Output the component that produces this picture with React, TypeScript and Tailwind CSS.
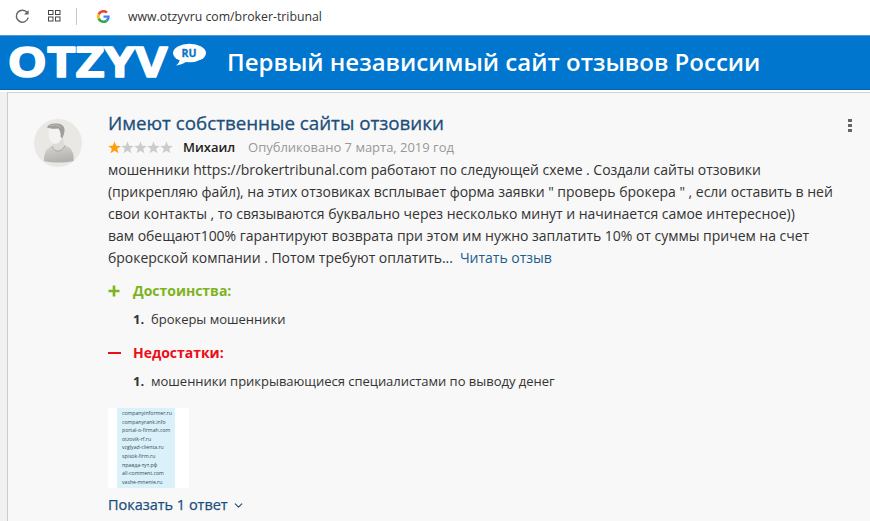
import { ChevronDown } from "lucide-react";

const reviewLines = [
  "мошенники https://brokertribunal.com работают по следующей схеме . Создали сайты отзовики",
  "(прикрепляю файл), на этих отзовиках всплывает форма заявки \" проверь брокера \" , если оставить в ней",
  "свои контакты , то связываются буквально через несколько минут и начинается самое интересное))",
  "вам обещают100% гарантируют возврата при этом им нужно заплатить 10% от суммы причем на счет",
];

const attachedSites = [
  "companyinformer.ru",
  "companyrank.info",
  "portal-o-firmah.com",
  "otzovik-rf.ru",
  "vzglyad-clienta.ru",
  "spisok-firm.ru",
  "правда-тут.рф",
  "all-comment.com",
  "vashe-mnenie.ru",
];

function GoogleIcon() {
  return (
    <svg width="13" height="13" viewBox="0 0 48 48">
      <path fill="#EA4335" d="M24 9.5c3.54 0 6.71 1.22 9.21 3.6l6.85-6.85C35.9 2.38 30.47 0 24 0 14.62 0 6.51 5.38 2.56 13.22l7.98 6.19C12.43 13.72 17.74 9.5 24 9.5z" />
      <path fill="#4285F4" d="M46.98 24.55c0-1.57-.15-3.09-.38-4.55H24v9.02h12.94c-.58 2.96-2.26 5.48-4.78 7.18l7.73 6c4.51-4.18 7.09-10.36 7.09-17.65z" />
      <path fill="#FBBC05" d="M10.53 28.59c-.48-1.45-.76-2.99-.76-4.59s.27-3.14.76-4.59l-7.98-6.19C.92 16.46 0 20.12 0 24c0 3.88.92 7.54 2.56 10.78l7.97-6.19z" />
      <path fill="#34A853" d="M24 48c6.48 0 11.93-2.13 15.89-5.81l-7.73-6c-2.15 1.45-4.92 2.3-8.16 2.3-6.26 0-11.57-4.22-13.47-9.91l-7.98 6.19C6.51 42.62 14.62 48 24 48z" />
    </svg>
  );
}

function AddressBar() {
  return (
    <div className="flex h-[35px] items-center bg-white pb-[3px]">
      <svg className="ml-[15px]" width="15" height="15" viewBox="0 0 15 15" fill="none" stroke="#666" strokeWidth="1.5">
        <path d="M12.2 3.6A6 6 0 1 0 13.2 8.6" />
        <path d="M13.6 1v4.6H9z" fill="#666" stroke="none" />
      </svg>
      <svg className="ml-[18px]" width="13" height="12" viewBox="0 0 13 12" fill="none" stroke="#444" strokeWidth="1">
        <rect x="0.5" y="0.5" width="4.5" height="4" />
        <rect x="7.5" y="0.5" width="4.5" height="4" />
        <rect x="0.5" y="7" width="4.5" height="4" />
        <rect x="7.5" y="7" width="4.5" height="4" />
      </svg>
      <span className="ml-[15px] h-[17px] w-px bg-[#c9c9c9]" />
      <span className="ml-[20px]"><GoogleIcon /></span>
      <span className="ml-[18px] pt-px text-[12.3px] leading-[20px] whitespace-nowrap text-[#333]">
        www.otzyvru com/broker-tribunal
      </span>
    </div>
  );
}

function Logo() {
  return (
    <svg className="overflow-visible" width="210" height="54" viewBox="0 0 210 54">
      <text x="7.5" y="41.4" fontSize="41" fontWeight="700" fill="#fff" stroke="#fff" strokeWidth="1.5" strokeLinejoin="round" textLength="160" lengthAdjust="spacingAndGlyphs">OTZYV</text>
      <ellipse cx="189.5" cy="17" rx="16.5" ry="9.3" fill="#fff" />
      <path d="M180 22c0 3-1.5 5.5-4 7.5 5-.5 9-2.5 11.5-5z" fill="#fff" />
      <text x="181.5" y="21" fontSize="11" fontWeight="700" fill="#0a74c9" stroke="#0a74c9" strokeWidth="0.3" textLength="15" lengthAdjust="spacingAndGlyphs">RU</text>
    </svg>
  );
}

function Avatar() {
  return (
    <svg width="48" height="48" viewBox="0 0 48 48">
      <defs>
        <linearGradient id="shirt" x1="0" y1="0" x2="0.3" y2="1">
          <stop offset="0" stopColor="#dad8d5" />
          <stop offset="1" stopColor="#b3b1ae" />
        </linearGradient>
      </defs>
      <circle cx="24" cy="24" r="24" fill="#eae8e5" />
      <path d="M10 42c-.3-7.5 2-13 9-15.500l11-.5c7 2 10.500 7.500 9.500 16-9 2-21 2-29.500 0z" fill="url(#shirt)" />
      <path d="M18.500 20v7.500c2 5 9 5 11.500-.5l-1-9z" fill="#dddbd8" />
      <path d="M18 27c2 7 10 7 13-.5" fill="none" stroke="#a5a3a0" strokeWidth="0.8" />
      <path d="M15 9c-.8 6 0 12 4 15.500 4 1.500 8-2 9.500-7V9c-5-4-11-4-13.500 0z" fill="#f4f3f1" />
      <path d="M13 8.500c1-3 5-4.500 9-4 5-.5 9 2.500 8.500 7-.2 3-1 5.500-2.500 8l-1.500-2c.5-3-.5-5.500-2-8-4 .5-8 .5-11.500-1z" fill="#a09e9b" />
      <path d="M16 7c4-1.500 8-1.500 11 1.500" fill="none" stroke="#bebcb9" strokeWidth="1" />
    </svg>
  );
}

function Stars() {
  return (
    <svg width="65" height="13" viewBox="0 0 65 13">
      {[0, 1, 2, 3, 4].map((i) => (
        <path
          key={i}
          d="M6.5 0l1.700 4.300 4.600.2-3.600 2.800 1.200 4.500-3.900-2.500-3.900 2.500 1.200-4.500L.2 4.500l4.600-.2z"
          fill={i === 0 ? "#ff9d0a" : "#cbcbcb"}
          transform={`translate(${i * 13} 0.4)`}
        />
      ))}
    </svg>
  );
}

function Attachment() {
  return (
    <div className="mt-[16px] h-[80px] w-[81px] overflow-hidden bg-white pl-[9px]">
      <div className="h-full w-[58px] bg-[#daf1fa] pt-px pl-[5px] text-[5.2px] leading-[8.6px] text-[#344b59]">
        {attachedSites.map((site) => (
          <div key={site} className="whitespace-nowrap">{site}</div>
        ))}
      </div>
    </div>
  );
}

export default function App() {
  return (
    <div className="h-[521px] w-[870px] overflow-hidden bg-white font-['Open_Sans',sans-serif]">
      <AddressBar />
      <header className="flex h-[55px] items-center border-t border-b border-t-[#4b9bd6] border-b-[#0862a9] bg-[#0076cf]">
        <Logo />
        <h1 className="ml-[17px] pb-[2px] text-[24px] leading-[30px] font-semibold whitespace-nowrap text-white">
          Первый независимый сайт отзывов России
        </h1>
      </header>
      <div className="flex h-[431px] pt-[2px]">
        <div className="w-[8px] border-r border-[#ccc] bg-[#f1f1f1]" />
        <main className="flex flex-1 border-t border-[#d2d2d2] bg-[#f8f8f8] pl-[26px]">
          <div className="w-[74px] shrink-0 pt-[26px]">
            <Avatar />
          </div>
          <article className="w-[728px] shrink-0 pt-[17px] text-[14px] leading-[22px] tracking-[-0.02px] text-[#333]">
            <h2 className="h-[26px] text-[18.8px] leading-[26px] font-medium whitespace-nowrap text-[#1b4f7c] [-webkit-text-stroke:0.3px_#1b4f7c]">
              Имеют собственные сайты отзовики
            </h2>
            <div className="mb-px flex h-[22px] items-center text-[13px]">
              <Stars />
              <span className="ml-[10px] font-semibold text-[#222]">Михаил</span>
              <span className="ml-[13px] text-[#999]">Опубликовано 7 марта, 2019 год</span>
            </div>
            {reviewLines.map((line) => (
              <div key={line} className="whitespace-nowrap">{line}</div>
            ))}
            <div className="whitespace-nowrap">
              брокерской компании . Потом требуют оплатить...
              <a className="ml-[7px] text-[#1b5e8c]">Читать отзыв</a>
            </div>

            <div className="mt-[11px] flex h-[22px] items-center font-bold text-[#7db31c]">
              <svg className="mr-[13px]" width="12" height="12" viewBox="0 0 12 12">
                <path d="M6 .5v11M.5 6h11" stroke="currentColor" strokeWidth="2.6" />
              </svg>
              Достоинства:
            </div>
            <div className="mt-[6px] flex h-[22px] pl-[25px] text-[13px]">
              <b className="w-[18px]">1.</b>
              <span>брокеры мошенники</span>
            </div>
            <div className="mt-[12px] flex h-[22px] items-center font-bold text-[#ec0d17]">
              <svg className="mr-[12px]" width="13" height="12" viewBox="0 0 13 12">
                <path d="M0 6h13" stroke="currentColor" strokeWidth="2" />
              </svg>
              Недостатки:
            </div>
            <div className="mt-[6px] flex h-[22px] pl-[25px] text-[13px]">
              <b className="w-[18px]">1.</b>
              <span>мошенники прикрывающиеся специалистами по выводу денег</span>
            </div>
            <Attachment />
            <div className="mt-[6px] flex h-[22px] items-center text-[14.5px] font-medium text-[#1b4f7c] [-webkit-text-stroke:0.25px_#1b4f7c]">
              Показать 1 ответ
              <ChevronDown className="ml-[4px]" size={13} strokeWidth={2} />
            </div>
          </article>
          <div className="ml-[12px] flex flex-col gap-[2px] pt-[26px]">
            <span className="h-[3px] w-[4px] bg-[#666]" />
            <span className="h-[3px] w-[4px] bg-[#666]" />
            <span className="h-[3px] w-[4px] bg-[#666]" />
          </div>
        </main>
      </div>
    </div>
  );
}
